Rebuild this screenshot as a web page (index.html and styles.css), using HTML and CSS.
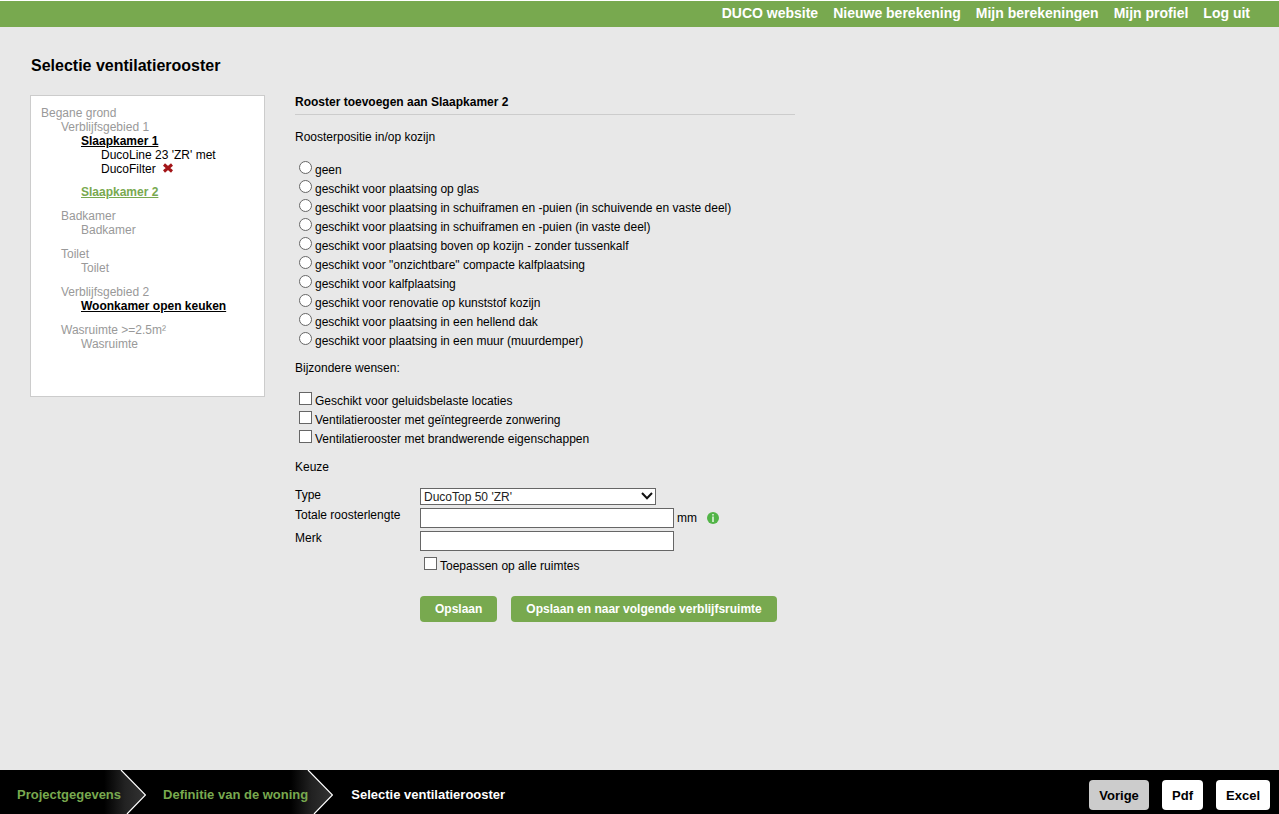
FILE: index.html
```html
<!DOCTYPE html>
<html lang="nl">
<head>
<meta charset="utf-8">
<title>Selectie ventilatierooster</title>
<link rel="stylesheet" href="styles.css">
</head>
<body class="page">
<header class="topbar">
  <nav class="topnav">
    <a href="#">DUCO website</a>
    <a href="#">Nieuwe berekening</a>
    <a href="#">Mijn berekeningen</a>
    <a href="#">Mijn profiel</a>
    <a href="#">Log uit</a>
  </nav>
</header>

<main class="main">
  <h1 class="title">Selectie ventilatierooster</h1>
  <div class="columns">
    <aside class="tree">
      <div>Begane grond</div>
      <ul class="branch areas">
        <li>Verblijfsgebied 1
          <ul class="branch rooms">
            <li><a class="room" href="#">Slaapkamer 1</a>
              <ul class="branch">
                <li class="grille">DucoLine 23 'ZR' met DucoFilter
                  <button class="remove" type="button" aria-label="Verwijderen"><svg width="12" height="10" viewBox="0 0 12 10"><path d="M2 1.5 10 8.5M10 1.5 2 8.5" stroke="#a31518" stroke-width="3"/></svg></button>
                </li>
              </ul>
            </li>
            <li><a class="room current" href="#">Slaapkamer 2</a></li>
          </ul>
        </li>
        <li>Badkamer<ul class="branch"><li>Badkamer</li></ul></li>
        <li>Toilet<ul class="branch"><li>Toilet</li></ul></li>
        <li>Verblijfsgebied 2<ul class="branch"><li><a class="room" href="#">Woonkamer open keuken</a></li></ul></li>
        <li>Wasruimte &gt;=2.5m²<ul class="branch"><li>Wasruimte</li></ul></li>
      </ul>
    </aside>

    <form class="form">
      <h2 class="subtitle">Rooster toevoegen aan Slaapkamer 2</h2>
      <fieldset class="group position">
        <legend>Roosterpositie in/op kozijn</legend>
        <label class="option"><input type="radio" name="pos">geen</label>
        <label class="option"><input type="radio" name="pos">geschikt voor plaatsing op glas</label>
        <label class="option"><input type="radio" name="pos">geschikt voor plaatsing in schuiframen en -puien (in schuivende en vaste deel)</label>
        <label class="option"><input type="radio" name="pos">geschikt voor plaatsing in schuiframen en -puien (in vaste deel)</label>
        <label class="option"><input type="radio" name="pos">geschikt voor plaatsing boven op kozijn - zonder tussenkalf</label>
        <label class="option"><input type="radio" name="pos">geschikt voor "onzichtbare" compacte kalfplaatsing</label>
        <label class="option"><input type="radio" name="pos">geschikt voor kalfplaatsing</label>
        <label class="option"><input type="radio" name="pos">geschikt voor renovatie op kunststof kozijn</label>
        <label class="option"><input type="radio" name="pos">geschikt voor plaatsing in een hellend dak</label>
        <label class="option"><input type="radio" name="pos">geschikt voor plaatsing in een muur (muurdemper)</label>
      </fieldset>
      <fieldset class="group">
        <legend>Bijzondere wensen:</legend>
        <label class="option"><input type="checkbox">Geschikt voor geluidsbelaste locaties</label>
        <label class="option"><input type="checkbox">Ventilatierooster met geïntegreerde zonwering</label>
        <label class="option"><input type="checkbox">Ventilatierooster met brandwerende eigenschappen</label>
      </fieldset>
      <fieldset class="group choice">
        <legend>Keuze</legend>
        <div class="fields">
          <label for="type">Type</label>
          <div class="select-wrap">
            <select class="select" id="type"><option>DucoTop 50 'ZR'</option></select>
            <svg class="caret" width="12" height="8" viewBox="0 0 12 8"><path d="M1 1 6 6.200 11 1" fill="none" stroke="#111" stroke-width="2"/></svg>
          </div>
          <label for="length">Totale roosterlengte</label>
          <div class="measure">
            <input class="text" id="length" type="text">
            <span>mm</span>
            <svg class="info" width="12" height="12" viewBox="0 0 12 12" role="img" aria-label="Info"><circle cx="6" cy="6" r="6" fill="#52b447"/><path d="M6 2v1.500M6 4.500v5.500" stroke="#c4e6bf" stroke-width="2"/></svg>
          </div>
          <label for="brand">Merk</label>
          <input class="text" id="brand" type="text">
          <label class="option apply"><input type="checkbox">Toepassen op alle ruimtes</label>
          <div class="actions">
            <button class="save" type="button">Opslaan</button>
            <button class="save" type="button">Opslaan en naar volgende verblijfsruimte</button>
          </div>
        </div>
      </fieldset>
    </form>
  </div>
</main>

<footer class="footer">
  <nav class="steps">
    <a class="step" href="#"><svg class="chevron" width="42" height="44" viewBox="0 0 42 44"><defs><linearGradient id="fade"><stop offset="0" stop-color="#000"/><stop offset=".5" stop-color="#222"/><stop offset="1" stop-color="#333"/></linearGradient></defs><path d="M0 0H17L41.500 25 23 44H0Z" fill="url(#fade)"/><path d="M17 0 41.500 25 23 44" fill="none" stroke="#fff" stroke-width="1.200"/></svg><span>Projectgegevens</span></a>
    <a class="step" href="#"><svg class="chevron" width="42" height="44" viewBox="0 0 42 44"><path d="M0 0H17L41.500 25 23 44H0Z" fill="url(#fade)"/><path d="M17 0 41.500 25 23 44" fill="none" stroke="#fff" stroke-width="1.200"/></svg><span>Definitie van de woning</span></a>
    <a class="step active" href="#"><span>Selectie ventilatierooster</span></a>
  </nav>
  <div class="exports">
    <button class="export back" type="button">Vorige</button>
    <button class="export" type="button">Pdf</button>
    <button class="export" type="button">Excel</button>
  </div>
</footer>
</body>
</html>
```
FILE: styles.css
```css
* { box-sizing: border-box; }

.page {
  margin: 0;
  min-height: 100vh;
  display: flex;
  flex-direction: column;
  background: #e8e8e8;
  color: #000;
  font: 12px/14px "Liberation Sans", Arial, sans-serif;
}

.page button,
.page input,
.page select { font-family: inherit; }

.topbar {
  border-top: 1px solid #fff;
  background: #78a94f;
  padding: 4px 29px 6px;
}
.topnav {
  display: flex;
  justify-content: flex-end;
  gap: 15px;
  font-size: 14px;
  line-height: 16px;
  font-weight: bold;
}
.topnav a { color: #fff; text-decoration: none; }

.main { flex: 1; padding: 29px 30px 30px; }
.title { margin: 0 0 19px 1px; font-size: 16px; line-height: 20px; }
.columns { display: flex; align-items: flex-start; gap: 30px; }

.tree {
  flex: 0 0 235px;
  min-height: 302px;
  padding: 10px;
  border: 1px solid #ccc;
  background: #fff;
  color: #999;
}
.branch { list-style: none; margin: 0; padding: 0 0 0 20px; }
.areas > li + li { margin-top: 10px; }
.rooms > li + li { margin-top: 9px; }
.room { color: #000; font-weight: bold; }
.room.current { color: #78a94f; }
.grille { color: #000; max-width: 120px; }
.remove {
  padding: 0;
  margin-left: 3px;
  border: 0;
  background: none;
  line-height: 10px;
  cursor: pointer;
}
.remove svg { display: block; }

.form { flex: 0 1 500px; }
.subtitle {
  margin: 0 0 15px;
  padding-bottom: 5px;
  border-bottom: 1px solid #ccc;
  font-size: 12px;
  line-height: 14px;
}
.group { margin: 0 0 11px; padding: 0; border: 0; min-width: 0; }
.group.position { margin-bottom: 10px; }
.group legend { padding: 0; margin-bottom: 17px; }
.group.choice legend { margin-bottom: 14px; }
.option { display: block; line-height: 19px; }
.option input {
  appearance: none;
  width: 13px;
  height: 13px;
  margin: 0 3px 0 4px;
  border: 1px solid #666;
  background: #fff;
}
.option input[type="radio"] { border-radius: 50%; }
.option input:checked { background: #78a94f; }

.fields {
  display: grid;
  grid-template-columns: 125px 1fr;
  row-gap: 3px;
  align-items: start;
}
.select-wrap { position: relative; width: 236px; }
.select {
  display: block;
  appearance: none;
  width: 100%;
  height: 17px;
  padding: 0 3px;
  border: 1px solid #666;
  border-radius: 0;
  background: #fff;
  color: #222;
  font-size: 12px;
}
.caret { position: absolute; right: 3px; top: 4px; pointer-events: none; }
.measure { display: flex; align-items: center; }
.measure span { margin: 0 10px 0 3px; }
.text {
  width: 254px;
  height: 20px;
  padding: 0 3px;
  border: 1px solid #666;
  background: #fff;
  font-size: 12px;
}
.apply, .actions { grid-column: 2; }
.apply { margin-top: 3px; }
.actions { display: flex; gap: 14px; margin-top: 17px; }
.save {
  height: 26px;
  padding: 0 15px;
  border: 0;
  border-radius: 4px;
  background: #78a94f;
  color: #fff;
  font-size: 12px;
  font-weight: bold;
  white-space: nowrap;
}

.footer {
  display: flex;
  justify-content: space-between;
  min-height: 44px;
  background: #000;
  font-size: 13px;
  font-weight: bold;
}
.steps { display: flex; }
.step {
  position: relative;
  display: flex;
  align-items: center;
  padding: 5px 25px 0 17px;
  color: #78a94f;
  text-decoration: none;
}
.step span { position: relative; }
.step.active { color: #fff; padding-left: 18px; }
.chevron { position: absolute; right: 0; top: 0; }
.exports { display: flex; gap: 13px; padding: 10px 9px 4px; }
.export {
  height: 30px;
  padding: 0 10px;
  border: 0;
  border-radius: 4px;
  background: #fff;
  color: #000;
  font-size: 13px;
  font-weight: bold;
}
.export.back { min-width: 60px; background: #ccc; }
```
